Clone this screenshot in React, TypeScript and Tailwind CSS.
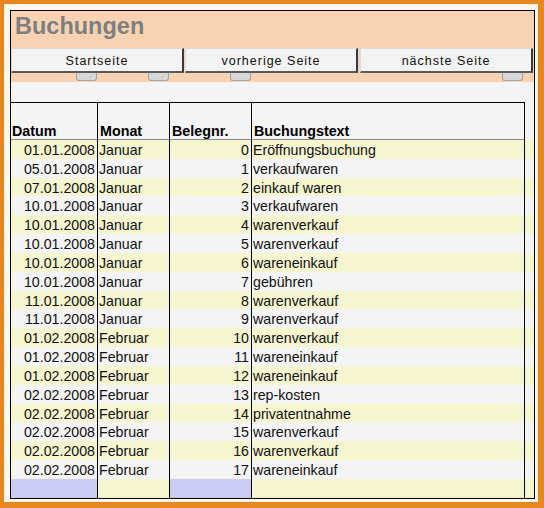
import React from "react";

const rows: [string, string, number, string][] = [
  ["01.01.2008", "Januar", 0, "Eröffnungsbuchung"],
  ["05.01.2008", "Januar", 1, "verkaufwaren"],
  ["07.01.2008", "Januar", 2, "einkauf waren"],
  ["10.01.2008", "Januar", 3, "verkaufwaren"],
  ["10.01.2008", "Januar", 4, "warenverkauf"],
  ["10.01.2008", "Januar", 5, "warenverkauf"],
  ["10.01.2008", "Januar", 6, "wareneinkauf"],
  ["10.01.2008", "Januar", 7, "gebühren"],
  ["11.01.2008", "Januar", 8, "warenverkauf"],
  ["11.01.2008", "Januar", 9, "warenverkauf"],
  ["01.02.2008", "Februar", 10, "warenverkauf"],
  ["01.02.2008", "Februar", 11, "wareneinkauf"],
  ["01.02.2008", "Februar", 12, "wareneinkauf"],
  ["02.02.2008", "Februar", 13, "rep-kosten"],
  ["02.02.2008", "Februar", 14, "privatentnahme"],
  ["02.02.2008", "Februar", 15, "warenverkauf"],
  ["02.02.2008", "Februar", 16, "warenverkauf"],
  ["02.02.2008", "Februar", 17, "wareneinkauf"],
];

function Btn({ label, w }: { label: string; w: string }) {
  return (
    <div
      className={`${w} h-[25px] flex items-center justify-center pt-[2px] bg-[#f3f3f3] border-t border-l border-t-[#dcdcdc] border-l-[#dcdcdc] border-r-2 border-b-2 border-r-[#3a3a3a] border-b-[#5a5a5a] text-[12.5px] tracking-[1px] text-[#111]`}
    >
      {label}
    </div>
  );
}

function Tab({ ml }: { ml: string }) {
  return (
    <div
      className={`${ml} w-[21px] h-[8px] bg-[#d7d7d7] border border-t-0 border-[#a4a4a4] rounded-b-[3px]`}
    />
  );
}

export default function App() {
  return (
    <div
      className="w-[544px] h-[508px] bg-[#e8861f] pt-[4px] pl-[4px] pr-[6px] pb-[6px]"
      style={{ fontFamily: '"Liberation Sans", Arial, sans-serif' }}
    >
      <div className="w-full h-full bg-[#fdf7ee] pt-[6px] pl-[6px] pr-[3px] pb-[3px]">
        <div className="w-full h-full border border-black flex flex-col bg-[#f4f4f4]">
          {/* title */}
          <div className="h-[37px] bg-[#f7d3b3] pl-[4px] pt-[4px]">
            <div className="text-[23.5px] leading-none font-bold text-[#7f7f7f]">
              Buchungen
            </div>
          </div>
          {/* buttons */}
          <div className="h-[25px] bg-[#f7d3b3] flex">
            <Btn label="Startseite" w="w-[173px]" />
            <div className="w-[1px]" />
            <Btn label="vorherige Seite" w="w-[173px]" />
            <div className="w-[2px]" />
            <Btn label="nächste Seite" w="w-[173px]" />
          </div>
          {/* tabs */}
          <div className="h-[9px] bg-[#f7d3b3] flex items-start">
            <Tab ml="ml-[65px]" />
            <Tab ml="ml-[51px]" />
            <Tab ml="ml-[61px]" />
            <Tab ml="ml-[251px]" />
          </div>
          {/* spacer */}
          <div className="h-[20px] bg-[#f4f4f4]" />
          {/* header */}
          <div className="h-[38px] flex text-[14.3px] leading-[15px] font-bold text-black">
            <div className="w-[87px] border-t border-r border-black border-b border-b-[#8a8a8a] flex items-end pl-[1px]">
              Datum
            </div>
            <div className="w-[72px] border-t border-r border-black border-b border-b-[#8a8a8a] flex items-end pl-[2px]">
              Monat
            </div>
            <div className="w-[82px] border-t border-r border-black border-b border-b-[#8a8a8a] flex items-end pl-[2px]">
              Belegnr.
            </div>
            <div className="w-[273px] border-t border-r border-black border-b border-b-[#8a8a8a] flex items-end pl-[2px]">
              Buchungstext
            </div>
            <div className="flex-1" />
          </div>
          {/* data */}
          {rows.map((r, i) => {
            const bg = i % 2 === 0 ? "bg-[#f5f5d0]" : "bg-[#f4f4f4]";
            return (
              <div
                key={i}
                className={`h-[18.83px] flex text-[14.2px] leading-[17px] text-[#111] ${bg}`}
              >
                <div className="w-[87px] border-r border-black text-right pr-[2px] pt-[2px]">
                  {r[0]}
                </div>
                <div className="w-[72px] border-r border-black pl-[1px] pt-[2px]">
                  {r[1]}
                </div>
                <div className="w-[82px] border-r border-black text-right pr-[2px] pt-[2px]">
                  {r[2]}
                </div>
                <div className="w-[273px] border-r border-black pl-[1px] whitespace-nowrap pt-[2px]">
                  {r[3]}
                </div>
                <div className="flex-1" />
              </div>
            );
          })}
          {/* empty last row */}
          <div className="flex-1 flex bg-[#f5f5d0]">
            <div className="w-[87px] border-r border-black bg-[#cbcbf3]" />
            <div className="w-[72px] border-r border-black" />
            <div className="w-[82px] border-r border-black bg-[#cbcbf3]" />
            <div className="w-[273px] border-r border-black" />
            <div className="flex-1" />
          </div>
        </div>
      </div>
    </div>
  );
}
